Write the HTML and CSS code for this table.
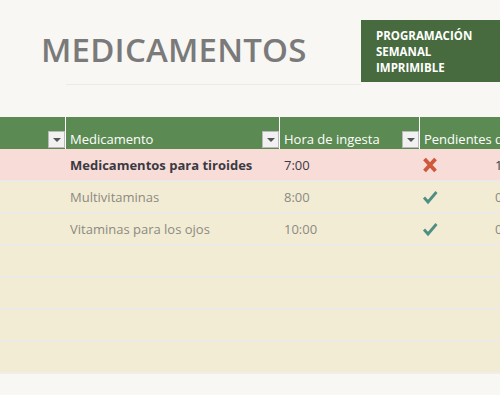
FILE: index.html
```html
<!DOCTYPE html>
<html lang="es">
<head>
<meta charset="utf-8">
<link rel="stylesheet" href="styles.css">
</head>
<body>
<div class="page">
  <header class="top">
    <div class="title-wrap">
      <h1 class="title">MEDICAMENTOS</h1>
      <div class="rule"></div>
    </div>
    <div class="badge">PROGRAMACIÓN<br>SEMANAL<br>IMPRIMIBLE</div>
  </header>
  <div class="sheet">
    <div class="row head">
      <div class="cell"><span class="dd"></span></div>
      <div class="cell"><span class="htxt">Medicamento</span><span class="dd"></span></div>
      <div class="cell"><span class="htxt">Hora de ingesta</span><span class="dd"></span></div>
      <div class="cell"><span class="htxt">Pendientes de tomar</span></div>
    </div>
    <div class="row alert">
      <div class="cell"></div>
      <div class="cell">Medicamentos para tiroides</div>
      <div class="cell">7:00</div>
      <div class="cell icon-cell">
        <svg class="ico" width="16" height="16" viewBox="0 0 16 16"><path d="M2.5 2 L13.5 14 M13.5 2 L2.5 14" stroke="#d0573a" stroke-width="3.8" stroke-linecap="butt"/></svg>
        <span class="num">1</span>
      </div>
    </div>
    <div class="row">
      <div class="cell"></div>
      <div class="cell">Multivitaminas</div>
      <div class="cell">8:00</div>
      <div class="cell icon-cell">
        <svg class="ico" width="16" height="16" viewBox="0 0 16 16"><path d="M2 8.5 L6 13 L14.5 3" fill="none" stroke="#4f8f82" stroke-width="2.8"/></svg>
        <span class="num">0</span>
      </div>
    </div>
    <div class="row">
      <div class="cell"></div>
      <div class="cell">Vitaminas para los ojos</div>
      <div class="cell">10:00</div>
      <div class="cell icon-cell">
        <svg class="ico" width="16" height="16" viewBox="0 0 16 16"><path d="M2 8.5 L6 13 L14.5 3" fill="none" stroke="#4f8f82" stroke-width="2.8"/></svg>
        <span class="num">0</span>
      </div>
    </div>
    <div class="row"><div class="cell"></div><div class="cell"></div><div class="cell"></div><div class="cell"></div></div>
    <div class="row"><div class="cell"></div><div class="cell"></div><div class="cell"></div><div class="cell"></div></div>
    <div class="row"><div class="cell"></div><div class="cell"></div><div class="cell"></div><div class="cell"></div></div>
    <div class="row last"><div class="cell"></div><div class="cell"></div><div class="cell"></div><div class="cell"></div></div>
  </div>
</div>
</body>
</html>
```
FILE: styles.css
```css
html, body {
  margin: 0;
  padding: 0;
  background: #f8f7f3;
}
.page {
  width: 500px;
  height: 395px;
  overflow: hidden;
  font-family: "Open Sans", "Liberation Sans", sans-serif;
}
.top {
  display: flex;
  height: 117px;
  align-items: flex-start;
}
.title-wrap {
  width: 361px;
  padding-top: 28px;
}
.title {
  margin: 0 0 0 41px;
  font-size: 33px;
  line-height: 44px;
  font-weight: 600;
  color: #7a7a7a;
  letter-spacing: 0.2px;
}
.rule {
  margin: 12px 0 0 66px;
  height: 1px;
  background: #ebeae6;
  width: 295px;
}
.badge {
  margin-top: 20px;
  flex: 1;
  height: 62px;
  box-sizing: border-box;
  background: #476b3e;
  color: #ffffff;
  font-size: 11.5px;
  font-weight: 700;
  line-height: 16px;
  padding: 8px 0 0 15px;
}
.sheet {
  width: 620px;
}
.row {
  display: grid;
  grid-template-columns: 66px 214px 140px 200px;
  height: 32px;
  background: #f2ecd5;
  border-top: 2px solid #ebeae8;
  box-sizing: border-box;
  color: #8c8a80;
  font-size: 13px;
}
.row.last {
  border-bottom: 2px solid #efeeea;
  height: 34px;
}
.row.alert {
  background: #f8dcd8;
  color: #3a3a42;
  font-weight: 700;
  border-top: none;
  height: 31px;
}
.row.head {
  background: #5b8b52;
  color: #ffffff;
  height: 32px;
  border-top: none;
}
.cell {
  display: flex;
  align-items: center;
  padding-left: 4px;
  white-space: nowrap;
}
.row.alert .cell:nth-child(3),
.row.alert .cell:nth-child(4) {
  font-weight: 400;
}
.head .cell {
  align-items: flex-end;
  padding-bottom: 1px;
  justify-content: space-between;
  padding-right: 1px;
  border-left: 1px solid #ffffff;
  margin-left: -1px;
}
.head .cell:first-child {
  border-left: none;
  margin-left: 0;
  justify-content: flex-end;
}
.htxt {
  line-height: 18px;
}
.dd {
  width: 15px;
  height: 15px;
  background: #f1f1f1;
  border: 1px solid #b9b9b9;
  position: relative;
  flex: none;
}
.dd::after {
  content: "";
  position: absolute;
  left: 4px;
  top: 6px;
  border-left: 4px solid transparent;
  border-right: 4px solid transparent;
  border-top: 4px solid #555555;
}
.icon-cell {
  padding-left: 2px;
  gap: 57px;
}
.ico {
  flex: none;
}
.num {
  font-weight: 400;
}
```
